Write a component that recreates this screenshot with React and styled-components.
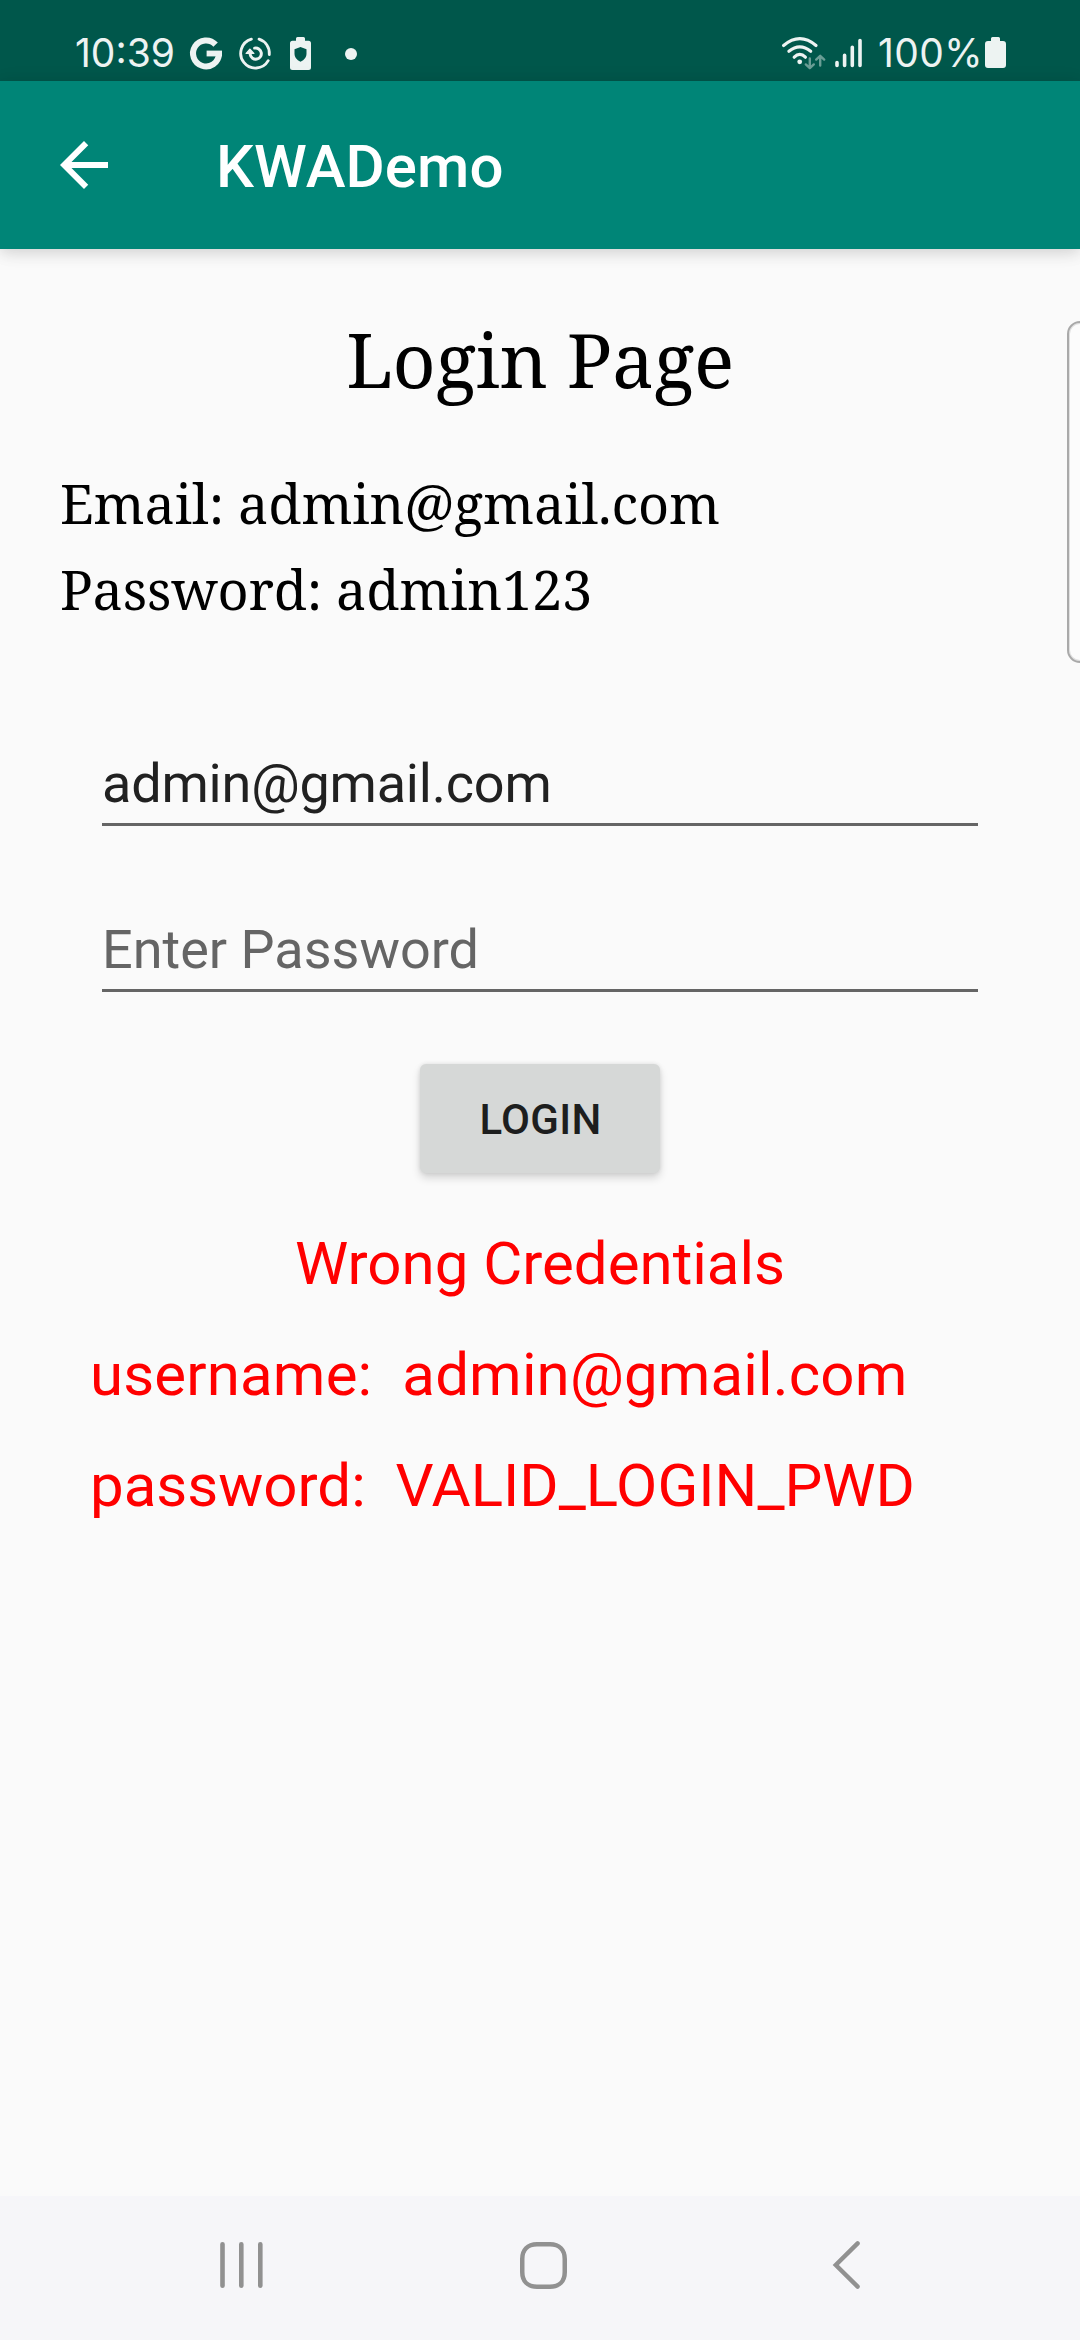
import React from "react";
import styled, { createGlobalStyle } from "styled-components";

const GlobalStyle = createGlobalStyle`
  * { box-sizing: border-box; }
  body { margin: 0; background: #fafafa; }
`;

const Screen = styled.div`
  position: relative;
  display: flex;
  flex-direction: column;
  width: 1080px;
  height: 2340px;
  overflow: hidden;
  background: #fafafa;
  font-family: Roboto, "Liberation Sans", sans-serif;
`;

const StatusBar = styled.header`
  display: flex;
  justify-content: space-between;
  align-items: center;
  flex: none;
  height: 81px;
  padding: 26px 74px 0 75px;
  background: #00574b;
`;

const StatusGroup = styled.div`
  display: flex;
  align-items: center;
`;

const StatusText = styled.span`
  width: ${(p) => p.$width}px;
  margin-left: ${(p) => p.$shift || 0}px;
  padding-bottom: 2px;
  font-family: Inter, Roboto, sans-serif;
  font-size: 39px;
  line-height: 48px;
  letter-spacing: ${(p) => p.$tracking || 0}px;
  white-space: nowrap;
  color: #edf3f2;
`;

const Glyph = styled.svg`
  display: block;
  flex: none;
  overflow: visible;
  margin-left: ${(p) => p.$shift || 0}px;
`;

const AppBar = styled.div`
  position: relative;
  display: flex;
  align-items: center;
  flex: none;
  gap: 96px;
  height: 168px;
  padding-left: 48px;
  background: #008577;
  box-shadow: 0 4px 14px rgba(0, 0, 0, 0.12), 0 2px 22px rgba(0, 0, 0, 0.06);
`;

const AppTitle = styled.h1`
  margin: 0;
  padding-top: 4px;
  font-size: 60px;
  font-weight: 500;
  line-height: 70px;
  letter-spacing: 0.1px;
  color: #ffffff;
`;

const Content = styled.main`
  display: flex;
  flex-direction: column;
  flex: 1;
  padding-top: 59px;
`;

const PageTitle = styled.h2`
  margin: 0;
  font-family: "Noto Serif", "DejaVu Serif", serif;
  font-size: 75px;
  font-weight: 400;
  line-height: 102px;
  text-align: center;
  letter-spacing: -0.25px;
  color: #000000;
`;

const Hints = styled.div`
  margin-top: 50px;
  padding-left: 60px;
`;

const Hint = styled.p`
  margin: 0;
  font-family: "Noto Serif", "DejaVu Serif", serif;
  font-size: 54px;
  line-height: 86px;
  letter-spacing: ${(p) => p.$tracking || 0}px;
  white-space: nowrap;
  color: #000000;
`;

const Form = styled.form`
  display: flex;
  flex-direction: column;
  align-items: center;
  margin-top: 119px;
  padding: 0 102px;
`;

const Field = styled.input`
  width: 100%;
  height: 75px;
  margin: 0 0 ${(p) => p.$below}px;
  padding: 0 0 8px;
  border: 0;
  border-bottom: 3px solid #656565;
  border-radius: 0;
  outline: none;
  background: transparent;
  font-family: Roboto, "Liberation Sans", sans-serif;
  font-size: 54px;
  line-height: 64px;
  letter-spacing: ${(p) => p.$tracking || 0}px;
  color: #212121;

  &::placeholder {
    color: #656565;
    opacity: 1;
  }
`;

const LoginButton = styled.button`
  width: 240px;
  height: 109px;
  padding: 2px 0 0 1px;
  border: 0;
  border-radius: 6px;
  background: #d6d8d7;
  box-shadow: 0 5px 8px rgba(0, 0, 0, 0.15), 0 0 4px rgba(0, 0, 0, 0.1);
  font-family: Roboto, "Liberation Sans", sans-serif;
  font-size: 42px;
  font-weight: 500;
  line-height: 50px;
  letter-spacing: 0.3px;
  color: #1d1e1e;
`;

const Errors = styled.div`
  margin-top: 35px;
  padding: 0 90px;
`;

const ErrorLine = styled.p`
  margin: 0;
  font-size: 60px;
  line-height: 111px;
  letter-spacing: ${(p) => p.$tracking || 0}px;
  text-align: ${(p) => p.$align || "left"};
  white-space: pre;
  color: #ff0000;
`;

const EdgeHandle = styled.div`
  position: absolute;
  top: 321px;
  right: -20px;
  width: 33px;
  height: 342px;
  border: 2px solid #a9a9a9;
  border-radius: 13px;
  background: #fcfcfc;
  box-shadow: inset 0 0 0 1px #e0e0e0;
`;

const NavBar = styled.nav`
  display: grid;
  grid-template-columns: repeat(3, 302px);
  justify-items: center;
  align-items: center;
  flex: none;
  height: 144px;
  padding: 0 0 6px 90px;
  background: #f6f6f9;
`;

const statusWhite = "#edf3f2";
const navGray = "#919191";

const GoogleGlyph = () => (
  <Glyph $shift={14} width="33" height="33" viewBox="0 0 33 33" fill="none">
    <path d="M25.6 7.6A13 13 0 1 0 29 17.2" stroke={statusWhite} strokeWidth="6" />
    <path d="M16.6 13.6H32V19.4H16.6Z" fill={statusWhite} />
  </Glyph>
);

const SyncGlyph = () => (
  <Glyph
    $shift={14.5}
    width="33"
    height="33"
    viewBox="0 0 33 33"
    fill="none"
    stroke={statusWhite}
    strokeWidth="2.8"
    strokeLinecap="round"
  >
    <path d="M13.4 2.2A14.7 14.7 0 1 0 30.2 23.6" />
    <path d="M21 2.2A14.7 14.7 0 0 1 31.3 17.6" />
    <path d="M16.6 11.1A5.6 5.6 0 1 1 12.2 17.6" strokeWidth="3" />
    <path d="M8.2 16.4L11.9 12.2L15.8 16.4Z" fill={statusWhite} strokeWidth="1.4" strokeLinejoin="round" />
  </Glyph>
);

const ShieldBatteryGlyph = () => (
  <Glyph $shift={19.5} width="21" height="33" viewBox="0 0 21 33" fill={statusWhite}>
    <path
      fillRule="evenodd"
      d="M6 1.5Q6 0 7.5 0H13.5Q15 0 15 1.5V3.8H18.5Q21 3.8 21 6.3V30.5Q21 33 18.5 33H2.5Q0 33 0 30.5V6.3Q0 3.8 2.5 3.8H6ZM10.5 10L4.5 12.3V17Q4.5 22 10.5 24.8Q16.5 22 16.5 17V12.3Z"
    />
  </Glyph>
);

const DotGlyph = () => (
  <Glyph $shift={34} width="12" height="12" viewBox="0 0 12 12">
    <circle cx="6" cy="6" r="6" fill={statusWhite} />
  </Glyph>
);

const WifiGlyph = () => (
  <Glyph width="45" height="35" viewBox="0 0 45 35" fill="none" strokeLinecap="round">
    <g stroke={statusWhite} strokeWidth="3.2">
      <path d="M2.6 9.5Q18.8 -4.2 35 9.5" />
      <path d="M7.9 15.2Q18.8 6.6 29.7 15.2" />
      <path d="M13.2 21.2Q18.8 15.6 24.4 21.2" />
    </g>
    <circle cx="18.7" cy="25.8" r="2.4" fill={statusWhite} />
    <g stroke="#6a9d95" strokeWidth="2.4" strokeLinejoin="round">
      <path d="M28.8 22.5V32M24.8 28.4L28.8 32.2L32.8 28.4" />
      <path d="M39.2 29.5V20M35.2 23.6L39.2 19.8L43.2 23.6" />
    </g>
  </Glyph>
);

const SignalGlyph = () => (
  <Glyph
    $shift={9}
    width="27"
    height="33"
    viewBox="0 0 27 33"
    stroke={statusWhite}
    strokeWidth="3.6"
    strokeLinecap="round"
  >
    <path d="M2 25.5V28.5M9.6 18.2V28.5M17.3 10.3V28.5M25 3.5V28.5" />
  </Glyph>
);

const BatteryGlyph = () => (
  <Glyph $shift={5} width="21" height="33" viewBox="0 0 21 33" fill={statusWhite}>
    <path d="M6 1.5Q6 0 7.5 0H13.5Q15 0 15 1.5V4H18Q21 4 21 7V28Q21 31 18 31H3Q0 31 0 28V7Q0 4 3 4H6Z" />
  </Glyph>
);

const BackArrow = () => (
  <Glyph width="72" height="72" viewBox="0 0 24 24" fill="#ffffff">
    <path d="M20 11H7.83l5.59-5.59L12 4l-8 8 8 8 1.41-1.41L7.83 13H20z" />
  </Glyph>
);

const RecentsIcon = () => (
  <Glyph width="43" height="46" viewBox="0 0 43 46" stroke={navGray} strokeWidth="4.6" strokeLinecap="round">
    <path d="M2.5 2.3V43.7M21.3 2.3V43.7M40.3 2.3V43.7" />
  </Glyph>
);

const HomeIcon = () => (
  <Glyph width="47" height="47" viewBox="0 0 47 47" fill="none" stroke={navGray} strokeWidth="4.5">
    <path d="M17 2.25H30C39.5 2.25 44.75 8 44.75 17V30C44.75 39 39.5 44.75 30 44.75H17C7.5 44.75 2.25 39 2.25 30V17C2.25 8 7.5 2.25 17 2.25Z" />
  </Glyph>
);

const BackIcon = () => (
  <Glyph
    $shift={2}
    width="27"
    height="48"
    viewBox="0 0 27 48"
    fill="none"
    stroke={navGray}
    strokeWidth="4.4"
    strokeLinecap="round"
  >
    <path d="M24.6 2.4L2.8 24L24.6 45.6" />
  </Glyph>
);

export default function App() {
  return (
    <>
      <GlobalStyle />
      <Screen>
        <StatusBar>
          <StatusGroup>
            <StatusText $width={101}>10:39</StatusText>
            <GoogleGlyph />
            <SyncGlyph />
            <ShieldBatteryGlyph />
            <DotGlyph />
          </StatusGroup>
          <StatusGroup>
            <WifiGlyph />
            <SignalGlyph />
            <StatusText $shift={16} $width={102} $tracking={0.4}>
              100%
            </StatusText>
            <BatteryGlyph />
          </StatusGroup>
        </StatusBar>
        <AppBar>
          <BackArrow />
          <AppTitle>KWADemo</AppTitle>
        </AppBar>
        <Content>
          <PageTitle>Login Page</PageTitle>
          <Hints>
            <Hint $tracking={-0.08}>Email: admin@gmail.com</Hint>
            <Hint $tracking={-0.15}>Password: admin123</Hint>
          </Hints>
          <Form>
            <Field $below={91} $tracking={-0.2} defaultValue="admin@gmail.com" />
            <Field $below={72} placeholder="Enter Password" />
            <LoginButton type="button">LOGIN</LoginButton>
          </Form>
          <Errors>
            <ErrorLine $align="center">Wrong Credentials</ErrorLine>
            <ErrorLine $tracking={0.15}>{"username:  admin@gmail.com"}</ErrorLine>
            <ErrorLine>{"password:  VALID_LOGIN_PWD"}</ErrorLine>
          </Errors>
        </Content>
        <NavBar>
          <RecentsIcon />
          <HomeIcon />
          <BackIcon />
        </NavBar>
        <EdgeHandle />
      </Screen>
    </>
  );
}
